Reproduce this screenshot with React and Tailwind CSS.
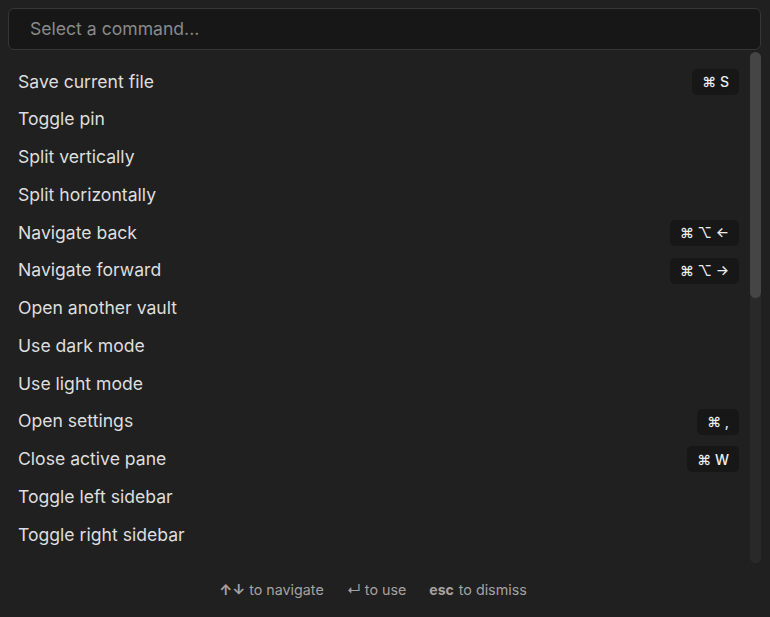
const commands = [
  { label: "Save current file", keys: "⌘ S" },
  { label: "Toggle pin" },
  { label: "Split vertically" },
  { label: "Split horizontally" },
  { label: "Navigate back", keys: "⌘ ⌥ ←" },
  { label: "Navigate forward", keys: "⌘ ⌥ →" },
  { label: "Open another vault" },
  { label: "Use dark mode" },
  { label: "Use light mode" },
  { label: "Open settings", keys: "⌘ ," },
  { label: "Close active pane", keys: "⌘ W" },
  { label: "Toggle left sidebar" },
  { label: "Toggle right sidebar" },
  { label: "Open graph view" },
];

export default function App() {
  return (
    <div
      className="w-[770px] h-[617px] bg-[#202020] flex flex-col overflow-hidden"
      style={{ fontFamily: "Inter, 'Noto Sans', 'DejaVu Sans', sans-serif" }}
    >
      {/* INPUT */}
      <div className="pt-2 pl-2 pr-[9px]">
        <div className="h-[42px] rounded-[6px] border border-[#363636] bg-[#171717] flex items-center px-[21px]">
          <input
            placeholder="Select a command..."
            className="w-full bg-transparent outline-none text-[17.6px] text-[#dadada] placeholder:text-[#8a8a8a]"
          />
        </div>
      </div>

      {/* LIST */}
      <div className="flex-1 min-h-0 flex mt-[2px] pl-2 pr-[9px]">
        <div className="flex-1 overflow-hidden pt-[11px]">
          {commands.map((cmd) => (
            <div
              key={cmd.label}
              className="h-[37.75px] flex items-center justify-between pl-[10px] pr-[11px]"
            >
              <span className="text-[17.6px] text-[#dedede]">{cmd.label}</span>
              {cmd.keys && (
                <span className="h-[26px] px-[10px] rounded-[5px] bg-[#171717] flex items-center text-[14px] font-medium text-[#ececec]">
                  {cmd.keys}
                </span>
              )}
            </div>
          ))}
        </div>

        {/* SCROLLBAR */}
        <div className="w-[11px] rounded-full bg-[#292929]">
          <div className="h-[246px] rounded-full bg-[#454545]" />
        </div>
      </div>

      {/* FOOTER */}
      <div className="h-[54px] flex items-center justify-center gap-[23px] pr-[24px] text-[14.3px] text-[#a3a3a3]">
        <span>
          <span className="mr-[4px] font-bold">↑↓</span>to navigate
        </span>
        <span>
          <span className="mr-[4px]">↵</span>to use
        </span>
        <span>
          <span className="font-bold mr-[5px] text-[14px]">esc</span>to dismiss
        </span>
      </div>
    </div>
  );
}
